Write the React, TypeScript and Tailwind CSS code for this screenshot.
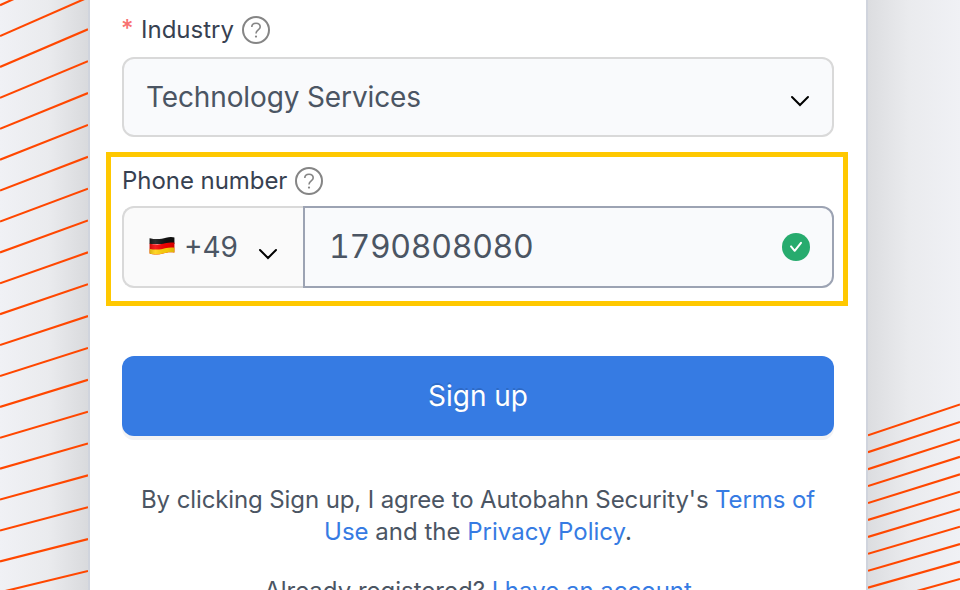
import React from "react";

const leftLines = Array.from({ length: 21 }, (_, i) => ({
  start: 5.2 + 30.9 * i,
  end: -34.4 + 31.86 * i,
}));
const rightLines = Array.from({ length: 12 }, (_, i) => ({
  start: 435.3 + 16.93 * i,
  end: 404.5 + 17.45 * i,
}));

function Help() {
  return (
    <svg className="h-7 w-7 shrink-0" viewBox="0 0 28 28" fill="none" stroke="#858585" strokeWidth="2">
      <circle cx="14" cy="14" r="13" />
      <path d="M9.8 11.1C9.8 8.7 11.5 7.3 14 7.3S18.2 8.8 18.2 11C18.2 14 14 14 14 17.4" strokeWidth="1.6" />
      <circle cx="14" cy="20.6" r="1.1" fill="#858585" stroke="none" />
    </svg>
  );
}

function Chevron() {
  return (
    <svg className="h-3 w-5 shrink-0" viewBox="0 0 20 12" fill="none" stroke="#000" strokeWidth="2" strokeLinecap="round" strokeLinejoin="miter">
      <path d="M2 2L10 10L18 2" />
    </svg>
  );
}

function Flag() {
  return (
    <svg className="h-5 w-[26px] shrink-0" viewBox="0 0 26 20">
      <defs>
        <clipPath id="flag"><path d="M.6 2.2C7 3.8 13 3 17 1.8C21 .7 24 1.2 25.4 1.5V16.5C20 15.7 18 16.4 14 17.6C9 19.1 4 18.5 .6 17.4Z" /></clipPath>
        <linearGradient id="sheen">
          <stop offset="0" stopColor="#000" stopOpacity=".2" />
          <stop offset=".25" stopColor="#fff" stopOpacity=".12" />
          <stop offset=".7" stopColor="#000" stopOpacity=".05" />
          <stop offset="1" stopColor="#000" stopOpacity=".15" />
        </linearGradient>
      </defs>
      <g clipPath="url(#flag)">
        <path d="M0 0H26V8H0Z" fill="#111" />
        <path d="M0 7.5C7 9 12 8.5 16 7.3C20 6.2 23 6.3 26 6.7V20H0Z" fill="#f50000" />
        <path d="M0 12.7C7 14.2 12 13.5 16 12.3C20 11.3 23 11.3 26 11.8V20H0Z" fill="#ffd00a" />
        <path d="M0 0H26V20H0Z" fill="url(#sheen)" />
      </g>
    </svg>
  );
}

export default function App() {
  return (
    <div className="flex h-[590px] w-[960px] overflow-hidden bg-white font-['Inter','Liberation_Sans',sans-serif] text-[#4b5563]">
      <aside className="h-full w-[88px] shrink-0 bg-linear-to-r from-[#f0f1f5] via-[#eaebee] via-55% to-[#d9dadd]">
        <svg className="h-full w-full" viewBox="0 0 88 590" stroke="#ff4700" strokeWidth="2.1">
          {leftLines.map((l, i) => <path key={i} d={`M0 ${l.start}L88 ${l.end}`} />)}
        </svg>
      </aside>
      <main className="h-full w-[780px] shrink-0 border-x-2 border-[#d0d4dd] px-4">
        <div className="flex h-[57px] items-start px-4 pt-4">
          <span className="-mt-px -ml-px mr-px w-[19px] text-[24px] font-medium leading-7 text-[#f87171]">*</span>
          <span className="mr-2 w-[93px] whitespace-nowrap text-[24px] leading-7 text-[#374151]">Industry</span>
          <Help />
        </div>
        <div className="mx-4 flex h-20 items-center justify-between rounded-xl border-2 border-[#d9d9d9] bg-[#f9fafc] pl-[22px] pr-[22px]">
          <span className="text-[28px] tracking-[-0.13px]">Technology Services</span>
          <span className="pt-[8px]"><Chevron /></span>
        </div>
        <section className="mt-[15px] h-[154px] w-[742px] border-[5px] border-[#ffc800] px-[11px] pt-[10px]">
          <div className="flex h-[39px] items-start">
            <span className="mr-2 w-[165px] whitespace-nowrap text-[24px] leading-7 tracking-[-0.05px] text-[#374151]">Phone number</span>
            <Help />
          </div>
          <div className="flex h-[82px] w-[712px]">
            <div className="flex w-[181px] items-center rounded-l-xl border-2 border-r-0 border-[#d9d9d9] bg-[#fafafa] pl-[25px]">
              <span className="-mt-[3px]"><Flag /></span>
              <span className="ml-[9px] w-[54px] text-[28px]">+49</span>
              <span className="ml-5 pt-[14px]"><Chevron /></span>
            </div>
            <div className="flex flex-1 items-center justify-between rounded-r-xl border-2 border-[#9ca3b3] bg-[#f9fafc] pl-6 pr-[22px]">
              <span className="text-[32px] tabular-nums tracking-[-0.3px]">1790808080</span>
              <svg className="h-7 w-7" viewBox="0 0 28 28" fill="none">
                <circle cx="14" cy="14" r="14" fill="#27ab6e" />
                <path d="M9 13.4L12.7 17.8L19 9.8" stroke="#fff" strokeWidth="2" strokeLinecap="round" strokeLinejoin="round" />
              </svg>
            </div>
          </div>
        </section>
        <button className="mx-4 mt-[50px] block h-20 w-[712px] rounded-xl bg-[#367be3] text-[28px] text-white shadow-[0_4px_0_#f3f3f4] [text-shadow:0_-2px_0_rgba(0,0,0,0.12)]">Sign up</button>
        <p className="mt-12 text-center text-[24px] leading-8">
          <span className="tracking-[-0.11px]">By clicking Sign up, I agree to Autobahn Security's <span className="text-[#367be3]">Terms of</span></span><br />
          <span className="text-[#367be3]">Use</span> and the <span className="text-[#367be3]">Privacy Policy</span>.
        </p>
        <p className="mt-[27px] text-center text-[24px] leading-8">Already registered? <span className="text-[#367be3]">I have an account</span></p>
      </main>
      <aside className="h-full w-[92px] shrink-0 bg-linear-to-r from-[#dcdde0] via-[#eaebee] via-45% to-[#f0f1f5]">
        <svg className="h-full w-full" viewBox="0 0 92 590" stroke="#ff4700" strokeWidth="2.1">
          {rightLines.map((l, i) => <path key={i} d={`M0 ${l.start}L92 ${l.end}`} />)}
        </svg>
      </aside>
    </div>
  );
}
